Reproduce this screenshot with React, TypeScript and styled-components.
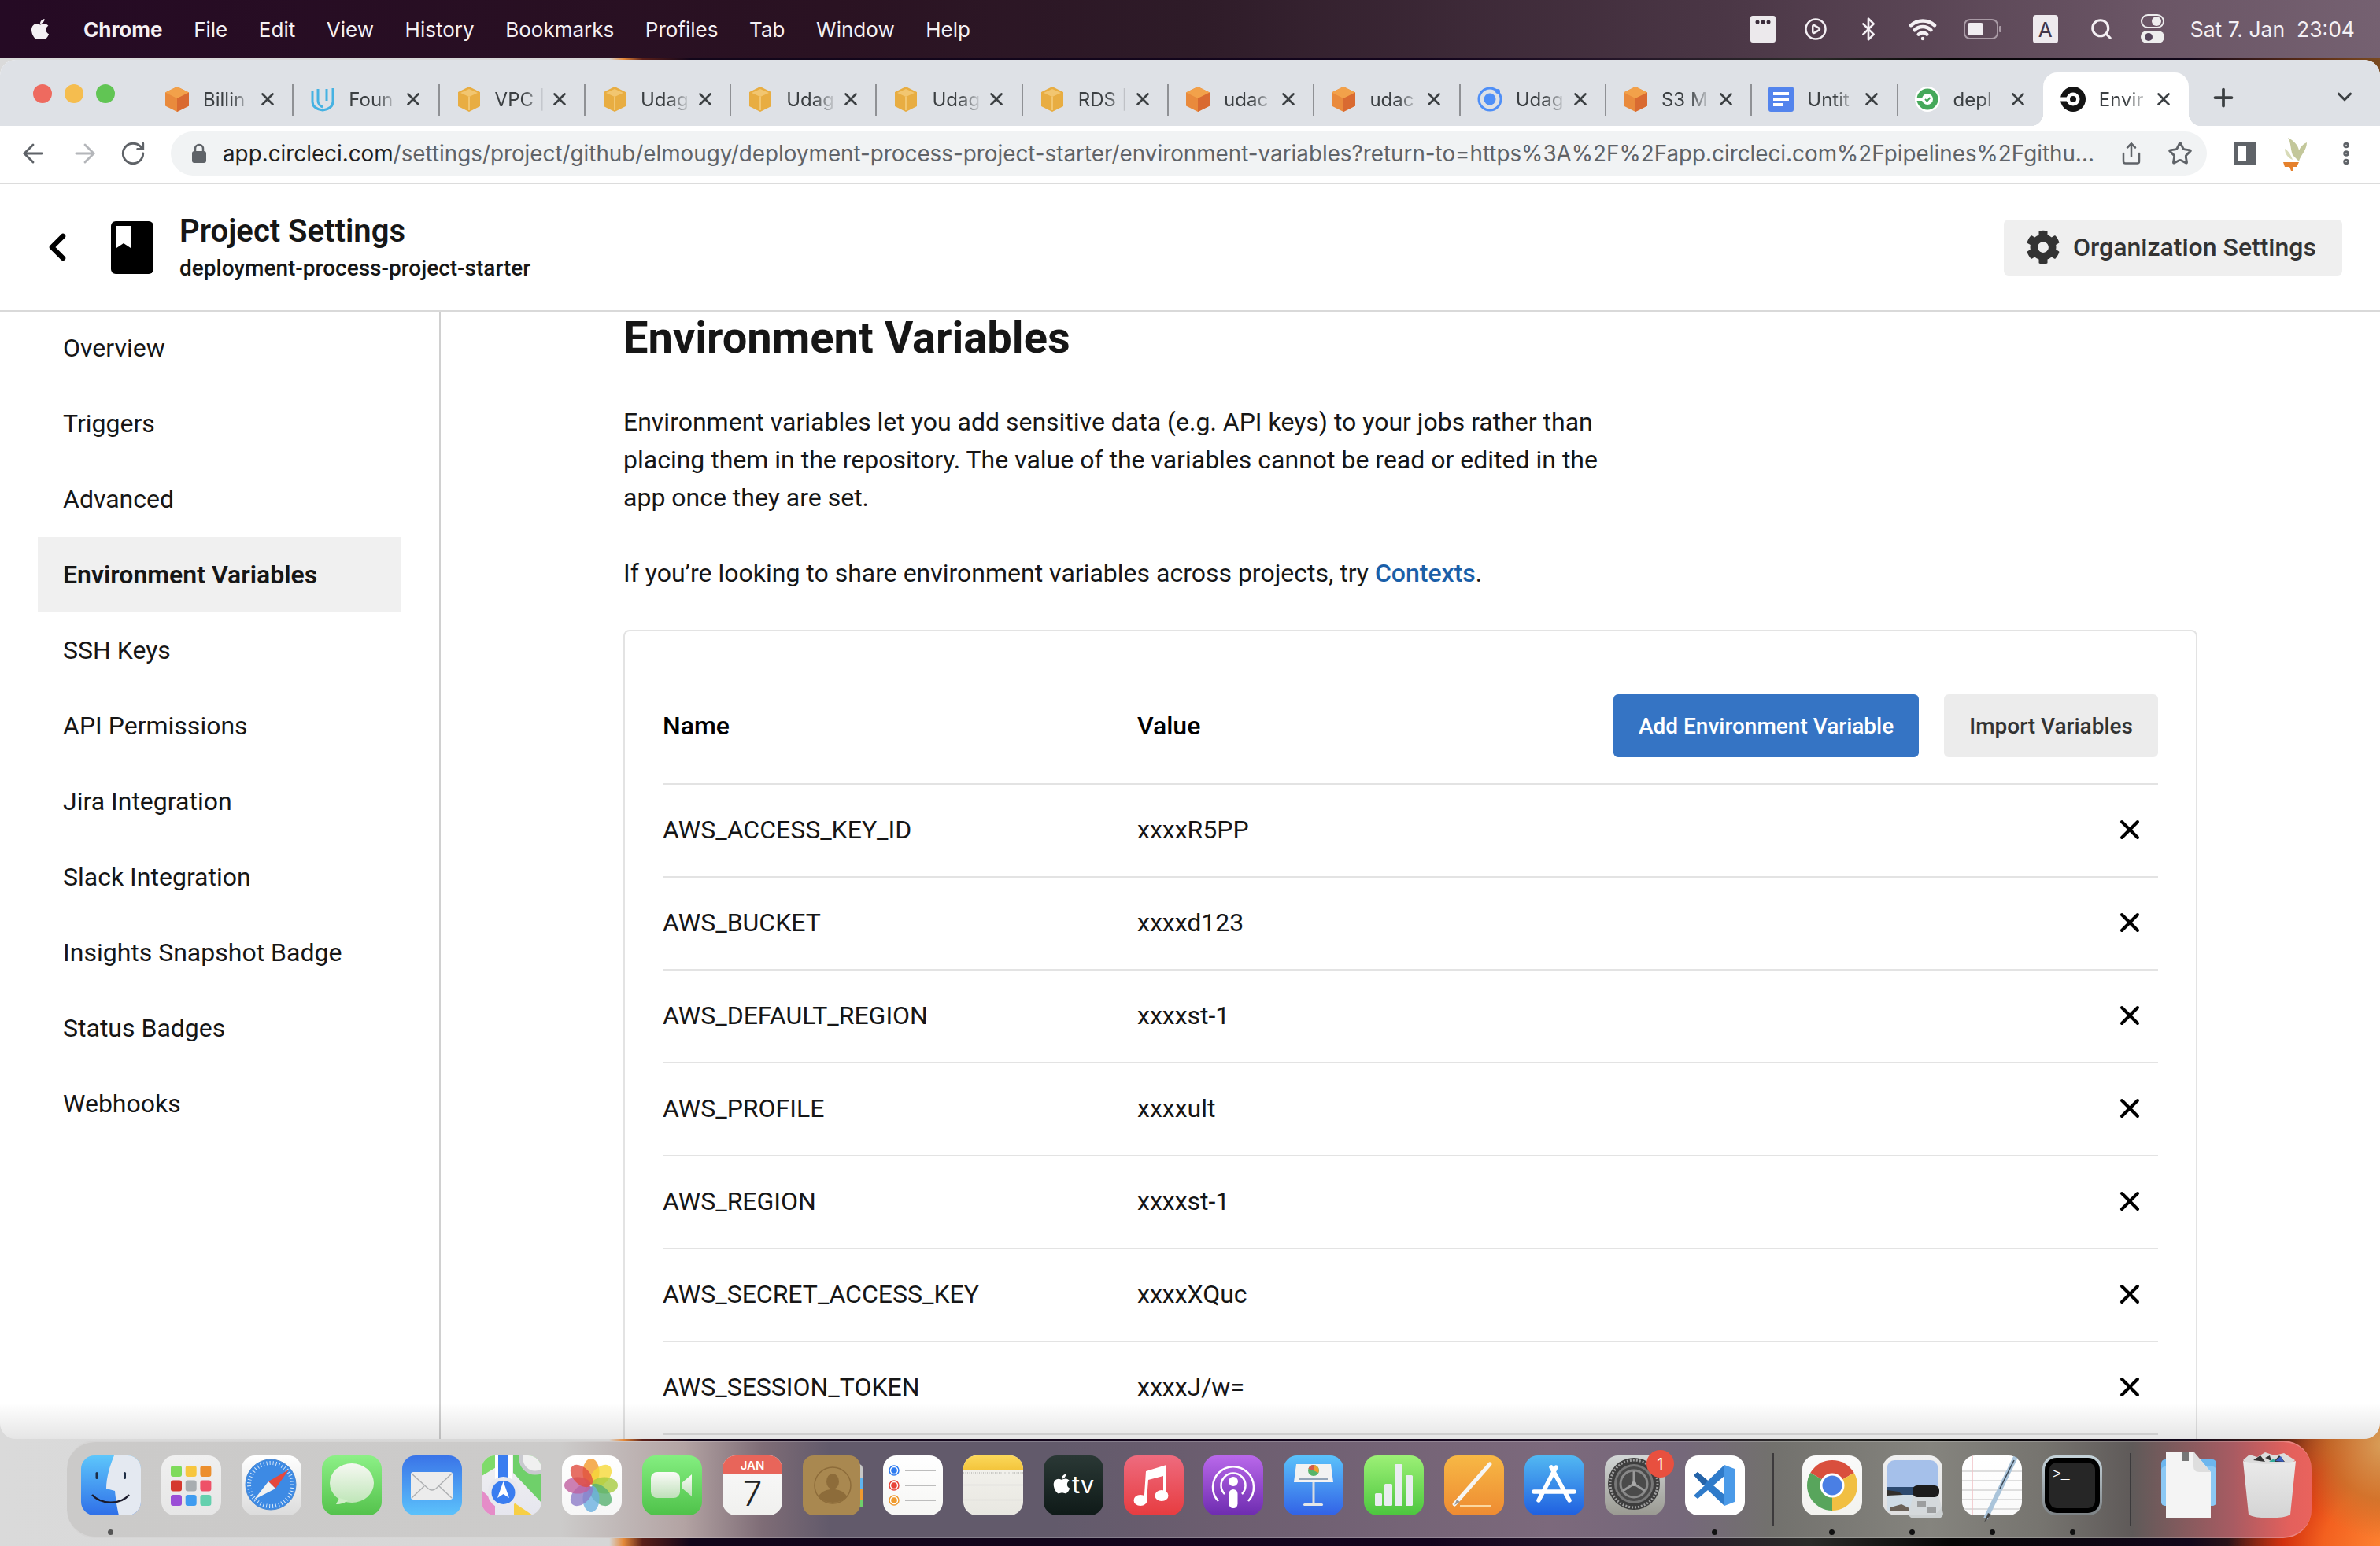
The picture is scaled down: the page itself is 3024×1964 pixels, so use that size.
import React from "react";
import styled, { createGlobalStyle } from "styled-components";
import { ArrowLeft, ArrowRight, RotateCw, Share, Star, EllipsisVertical, Plus, ChevronDown, ChevronLeft, X, Search, CirclePlay, Bluetooth, Wifi } from "lucide-react";
import { FaApple, FaCog } from "react-icons/fa";

const Global = createGlobalStyle`
  html, body { margin: 0; padding: 0; background: #111; }
  * { box-sizing: border-box; }
`;

const Desktop = styled.div`
  width: 3024px; height: 1964px; overflow: hidden; display: flex; flex-direction: column;
  font-family: Roboto, "Liberation Sans", sans-serif;
  background:
    radial-gradient(circle at 3030px 1835px, #d9a05a 0, rgba(201,120,47,.75) 70px, rgba(201,120,47,0) 120px),
    radial-gradient(circle at 3040px 1975px, #ff8a35 0, #f3601f 90px, #d2300f 140px, rgba(150,25,15,0) 210px),
    linear-gradient(90deg, #dadada 0, #d6d6d6 25.6%, #e58a3a 26.2%, #5a1f18 27%, #12061a 29%, #12041c 60%, #241528 68%, #2a2a28 76%, #060505 82%, #12071a 92%, #5a2c16 97%, #7a4a20 100%);
`;

const MenuBar = styled.div`
  height: 74px; flex: none; display: flex; align-items: center; padding: 0 32px 0 36px; color: #f4f0f4;
  font-family: Inter, "Liberation Sans", sans-serif; font-size: 26px;
  background: linear-gradient(90deg, #250a24 0, #2a1222 35%, #2e1b28 50%, #4a3645 72%, #6a5565 90%, #756171 100%);
`;
const MenuItems = styled.div` display: flex; align-items: center; gap: 39.6px; margin-left: 40px; `;
const MenuItem = styled.span<{ $bold?: boolean }>` font-weight: ${p => (p.$bold ? 700 : 400)}; `;
const Status = styled.div` margin-left: auto; display: flex; align-items: center; `;
const StatusSlot = styled.div<{ $w: number }>` width: ${p => p.$w}px; display: flex; justify-content: center; align-items: center; `;
const KeyBadge = styled.span` width: 32px; height: 36px; border-radius: 4px; background: #eeeaee; color: #43364a; font-size: 26px; display: flex; align-items: center; justify-content: center; `;
const Clock = styled.span` margin-left: 14px; white-space: pre; font-size: 26.5px; `;

const Window = styled.div`
  position: relative; height: 1752px; flex: none; margin-top: 2px; background: #fff; border-radius: 20px; overflow: hidden; display: flex; flex-direction: column;
`;
const BottomShade = styled.div`
  position: absolute; left: 0; right: 0; bottom: 0; height: 46px; pointer-events: none;
  background: linear-gradient(180deg, rgba(0,0,0,0), rgba(0,0,0,.1));
`;

const TabStrip = styled.div` height: 84px; flex: none; background: #dee1e6; display: flex; padding-top: 16px; `;
const Lights = styled.div` display: flex; gap: 16px; margin: 15px 41px 0 42px; flex: none; height: 24px; `;
const Light = styled.span<{ $c: string }>` width: 24px; height: 24px; border-radius: 50%; background: ${p => p.$c}; `;
const Tab = styled.div<{ $active?: boolean; $sep?: boolean }>`
  position: relative; width: 185.3px; height: 68px; flex: none; display: flex; align-items: center; padding-left: 22px;
  ${p => p.$active && `background: #fff; border-radius: 18px 18px 0 0;`}
  ${p => p.$sep && `&::after { content: ""; position: absolute; right: -1px; top: 15px; height: 40px; width: 2px; background: #8f9195; }`}
  ${p => p.$active && `
    &::before { content: ""; position: absolute; left: -16px; bottom: 0; width: 16px; height: 16px; background: radial-gradient(circle at 0 0, transparent 16px, #fff 16.5px); }
    &::after { content: ""; position: absolute; right: -16px; bottom: 0; width: 16px; height: 16px; background: radial-gradient(circle at 100% 0, transparent 16px, #fff 16.5px); }
  `}
`;
const TabTitle = styled.span`
  width: 64px; margin-left: 17px; white-space: nowrap; font-family: Inter, "Liberation Sans", sans-serif; font-size: 24px; color: #3c4043;
  -webkit-mask-image: linear-gradient(90deg, #000 55%, transparent 100%); mask-image: linear-gradient(90deg, #000 55%, transparent 100%);
`;
const TabClose = styled.span` margin-left: 5px; display: flex; color: #3c4043; `;
const NewTab = styled.span` margin-left: 26px; margin-top: 14px; display: flex; height: 40px; color: #3c4043; `;
const TabMenu = styled.span` margin-left: auto; margin-right: 30px; margin-top: 16px; display: flex; height: 36px; color: #3c4043; `;

const Toolbar = styled.div` height: 74px; flex: none; background: #fff; display: flex; align-items: center; padding: 0 0 2px 23px; border-bottom: 2px solid #dcdcdc; `;
const NavButton = styled.span<{ $off?: boolean; $gap?: number }>` display: flex; margin-left: ${p => p.$gap ?? 0}px; color: ${p => (p.$off ? "#b4b6ba" : "#5f6368")}; `;
const UrlBar = styled.div` width: 2587px; height: 56px; border-radius: 28px; background: #f1f3f4; margin-left: 31px; display: flex; align-items: center; padding-left: 26px; flex: none; `;
const UrlText = styled.div` margin-left: 20px; width: 2384px; white-space: nowrap; font-family: Inter, "Liberation Sans", sans-serif; font-size: 27.8px; color: #5f6368; `;
const UrlHost = styled.span` color: #1f1f1f; `;
const UrlAction = styled.span<{ $gap: number }>` margin-left: ${p => p.$gap}px; display: flex; color: #5f6368; `;
const ToolRight = styled.div` display: flex; align-items: center; margin-left: 33px; gap: 28px; color: #5f6368; `;

const PageHeader = styled.header` height: 162px; flex: none; border-bottom: 2px solid #d9d9d9; display: flex; align-items: center; padding: 0 48px 0 45px; background: #fff; `;
const BackIcon = styled.span` display: flex; color: #000; width: 96px; `;
const Titles = styled.div` margin-left: 33px; display: flex; flex-direction: column; `;
const Title = styled.h1` margin: 0; font-size: 40px; line-height: 50px; font-weight: 600; color: #161616; `;
const Subtitle = styled.div` font-size: 28px; line-height: 36px; font-weight: 500; color: #161616; margin-top: 4px; `;
const OrgButton = styled.button`
  margin-left: auto; width: 430px; height: 71px; border: 0; border-radius: 6px; background: #efefef; display: flex; align-items: center; gap: 16px; padding: 0 0 0 28px;
  font-family: inherit; font-size: 32px; font-weight: 500; color: #333;
`;

const Body = styled.div` flex: 1; min-height: 0; display: grid; grid-template-columns: 560px 1fr; `;
const Sidebar = styled.nav` border-right: 2px solid #d0d0d0; padding: 0 48px; display: flex; flex-direction: column; `;
const NavList = styled.div` margin-top: -2px; display: flex; flex-direction: column; `;
const NavRow = styled.div<{ $active?: boolean }>`
  height: 96px; flex: none; display: flex; align-items: center; padding-left: 32px; width: 462px; font-size: 32px; color: #161616;
  font-weight: ${p => (p.$active ? 600 : 400)}; background: ${p => (p.$active ? "#f0f0f0" : "transparent")};
`;
const Main = styled.main` padding: 1px 0 0 232px; overflow: hidden; `;
const Heading = styled.h2` margin: 0; font-size: 56px; line-height: 64px; font-weight: 700; color: #161616; `;
const Para = styled.p` margin: 0; width: 1260px; font-size: 32px; line-height: 48px; color: #161616; `;
const IntroPara = styled(Para)` margin-top: 51px; `;
const SharePara = styled(Para)` margin-top: 48px; `;
const Link = styled.a` color: #1a5fa9; font-weight: 500; `;
const Card = styled.section` margin-top: 48px; width: 2000px; min-height: 1300px; border: 2px solid #e3e3e3; border-radius: 8px; padding: 0 48px; background: #fff; `;
const TableHead = styled.div` height: 195px; padding-top: 80px; display: flex; align-items: flex-start; border-bottom: 2px solid #e3e3e3; `;
const HeadCell = styled.div<{ $w?: number }>` width: ${p => p.$w ?? 603}px; height: 80px; display: flex; align-items: center; font-size: 32px; font-weight: 500; color: #000; `;
const Buttons = styled.div` margin-left: auto; display: flex; gap: 32px; `;
const Btn = styled.button<{ $primary?: boolean }>`
  height: 80px; padding: 0 32px; border: 0; border-radius: 6px; font-family: inherit; font-size: 28px; font-weight: 500;
  background: ${p => (p.$primary ? "#3574c4" : "#ececec")}; color: ${p => (p.$primary ? "#fff" : "#333")};
`;
const Row = styled.div` height: 118px; display: flex; align-items: center; border-bottom: 2px solid #e3e3e3; font-size: 32px; color: #161616; padding-bottom: 2px; `;
const NameCell = styled.div` width: 603px; `;
const ValueCell = styled.div``;
const RowClose = styled.span` margin-left: auto; margin-right: 16px; display: flex; color: #000; `;

const Dock = styled.div`
  margin: 2px 0 0 85px; width: 2852px; height: 124px; flex: none; border-radius: 36px; display: flex; padding-left: 5px; overflow: visible;
  border-top: 2px solid rgba(255,255,255,.22); border-bottom: 2px solid rgba(255,255,255,.22);
  background: linear-gradient(90deg, #cbcac9 0, #cccbca 22%, #b3a3a3 27.5%, #7e6c76 31%, #625a6b 34%, #625a6b 44%, #6d5e70 52%, #7c697c 66%, #75687a 72%, #72716d 76%, #85847e 83%, #76746f 88%, #5f5a59 92%, #a85b62 96.5%, #e3605c 99%, #e9635d 100%);
`;
const Cell = styled.div` position: relative; width: 101.9px; flex: none; display: flex; flex-direction: column; align-items: center; padding-top: 17px; `;
const DockSvg = styled.svg` width: 76px; height: 76px; overflow: visible; flex: none; display: block; `;
const RunDot = styled.span<{ $on?: boolean }>` width: 7px; height: 7px; border-radius: 50%; margin-top: 18px; background: ${p => (p.$on ? "#111" : "transparent")}; `;
const FinderDot = styled(RunDot)` background: #555; `;
const NotifBadge = styled.span` position: absolute; left: 66px; top: 10px; width: 35px; height: 35px; border-radius: 50%; background: #e8503f; color: #fff; font-family: Inter, sans-serif; font-size: 20px; display: flex; align-items: center; justify-content: center; `;
const DockDivider = styled.div<{ $w: number }>` width: ${p => p.$w}px; flex: none; display: flex; justify-content: center; padding-top: 14px; &::before { content: ""; width: 2px; height: 92px; background: #3c3a3c; } `;

const Fav = styled.svg` width: 32px; height: 32px; flex: none; `;

const cube = (a: string, b: string, c: string) => (
  <Fav viewBox="0 0 32 32"><path d="M16 0 31 7.500v17L16 32 1 24.500v-17z" fill={b} /><path d="M16 0 31 7.500 16 15 1 7.500z" fill={a} /><path d="M16 15 31 7.500v17L16 32z" fill={c} /></Fav>
);
const orange = cube("#f2a14a", "#e98a3c", "#d96a31");
const yellow = (
  <Fav viewBox="0 0 32 32"><path d="M16 0 30 7v18l-14 7-14-7V7z" fill="#e8ad42" /><path d="M16 3 27 8 16 13 5 8z" fill="#f2c670" /><path d="M15 13h2v17h-2z" fill="#f2c670" /></Fav>
);
const favs: Record<string, React.ReactNode> = {
  orange, yellow,
  udacity: <Fav viewBox="0 0 32 32"><path d="M3 5v14c0 7 6 10 13 11 7-1 13-4 13-11V2" fill="none" stroke="#46b2e2" strokeWidth="3" /><path d="M10 3v15c0 4 3 7 6 8M21 3v15" fill="none" stroke="#46b2e2" strokeWidth="3" /></Fav>,
  ionic: <Fav viewBox="0 0 32 32"><circle cx="16" cy="16" r="14" fill="none" stroke="#4f8ff7" strokeWidth="3" /><circle cx="16" cy="16" r="7.500" fill="#4f8ff7" /><circle cx="26" cy="6" r="3" fill="#4f8ff7" /></Fav>,
  docs: <Fav viewBox="0 0 32 32"><rect width="32" height="32" rx="3" fill="#5384ed" /><rect x="6" y="7" width="20" height="4" fill="#fff" /><rect x="6" y="14" width="20" height="4" fill="#fff" /><rect x="6" y="21" width="13" height="4" fill="#fff" /></Fav>,
  green: <Fav viewBox="0 0 32 32"><circle cx="16" cy="16" r="16" fill="#fff" /><circle cx="16" cy="16" r="13.500" fill="#45a85a" /><circle cx="16" cy="16" r="7" fill="#fff" /><rect x="0" y="14" width="12" height="4" fill="#fff" /><path d="m13 16 2.500 2.500 4-4.500" fill="none" stroke="#45a85a" strokeWidth="2" /></Fav>,
  circle: <Fav viewBox="0 0 32 32"><circle cx="16" cy="16" r="16" fill="#141414" /><circle cx="16" cy="16" r="8.500" fill="#fff" /><circle cx="16" cy="16" r="4" fill="#141414" /><rect x="0" y="13.500" width="9" height="5" fill="#fff" /></Fav>,
};

const tabs: [string, string][] = [
  ["orange", "Billin"], ["udacity", "Foun"], ["yellow", "VPC |"], ["yellow", "Udag"], ["yellow", "Udag"], ["yellow", "Udag"], ["yellow", "RDS |"],
  ["orange", "udac"], ["orange", "udac"], ["ionic", "Udag"], ["orange", "S3 M"], ["docs", "Untit"], ["green", "depl"], ["circle", "Envir"],
];
const menus = ["File", "Edit", "View", "History", "Bookmarks", "Profiles", "Tab", "Window", "Help"];
const navItems = ["Overview", "Triggers", "Advanced", "Environment Variables", "SSH Keys", "API Permissions", "Jira Integration", "Slack Integration", "Insights Snapshot Badge", "Status Badges", "Webhooks"];
const rows = [
  ["AWS_ACCESS_KEY_ID", "xxxxR5PP"], ["AWS_BUCKET", "xxxxd123"], ["AWS_DEFAULT_REGION", "xxxxst-1"], ["AWS_PROFILE", "xxxxult"],
  ["AWS_REGION", "xxxxst-1"], ["AWS_SECRET_ACCESS_KEY", "xxxxXQuc"], ["AWS_SESSION_TOKEN", "xxxxJ/w="],
];

const G = ({ id, a, b }: { id: string; a: string; b: string }) => (
  <linearGradient id={id} x1="0" y1="0" x2="0" y2="1"><stop offset="0" stopColor={a} /><stop offset="1" stopColor={b} /></linearGradient>
);
const AppIcon = ({ n, a, b, extra, children }: { n: string; a: string; b: string; extra?: React.ReactNode; children?: React.ReactNode }) => (
  <DockSvg viewBox="0 0 76 76">
    <defs>
      <clipPath id={`sq-${n}`}><rect width="76" height="76" rx="17" /></clipPath>
      <G id={`bg-${n}`} a={a} b={b} />
    </defs>
    <g clipPath={`url(#sq-${n})`}><rect width="76" height="76" fill={`url(#bg-${n})`} />{children}</g>
    {extra}
  </DockSvg>
);

const lpColors = ["#7edb5b", "#f7c63e", "#ec8f2e", "#d5392f", "#a8adb0", "#ee5168", "#9a4ed6", "#3f9cf0", "#63d0ae"];
const petals = ["#f39a2c", "#f6d838", "#a8cc40", "#58b070", "#6cb0e0", "#8c7cc8", "#c060a0", "#e04c40"];

const dockApps: { key: string; on?: boolean; badge?: boolean; finder?: boolean; el: React.ReactNode }[] = [
  { key: "finder", finder: true, el: (
    <AppIcon n="finder" a="#5dc6fb" b="#2f6fe8">
      <path d="M42 0C37 12 32 28 32 42l11 3c1 11 3 23 5 31h28V0z" fill="#e4e9f1" />
      <rect x="18.500" y="21" width="3" height="9" rx="1.500" fill="#1d2c44" /><rect x="54" y="21" width="3" height="9" rx="1.500" fill="#1d2c44" />
      <path d="M14 50c12 13 36 13 47 0" fill="none" stroke="#1a1a2a" strokeWidth="2.500" />
    </AppIcon>) },
  { key: "launchpad", el: (
    <AppIcon n="lp" a="#f0f0f0" b="#e6e6e6">
      {lpColors.map((c, i) => <rect key={c} x={12 + (i % 3) * 18.7} y={13 + Math.floor(i / 3) * 18.5} width="14" height="14" rx="3" fill={c} />)}
    </AppIcon>) },
  { key: "safari", el: (
    <AppIcon n="safari" a="#ffffff" b="#dcdcdc">
      <circle cx="37" cy="37" r="32" fill="#3d8ae4" stroke="#4c88cf" strokeWidth="1" />
      <circle cx="37" cy="37" r="27.500" fill="none" stroke="#d8e8f8" strokeWidth="5" strokeDasharray="1 3" />
      <path d="M60 18 34 33l9 9z" fill="#e5483c" /><path d="M16 56l18-23 9 9z" fill="#f2f2f2" />
    </AppIcon>) },
  { key: "messages", el: (
    <AppIcon n="msg" a="#8cf086" b="#54c24c">
      <defs><G id="bub" a="#f6f8f2" b="#bfe6b8" /></defs>
      <ellipse cx="38" cy="35" rx="28" ry="25" fill="url(#bub)" /><path d="M22 54l-4 8c6 0 12-2 15-5z" fill="#d0eec8" />
    </AppIcon>) },
  { key: "mail", el: (
    <AppIcon n="mail" a="#3a74e8" b="#5cc2fb">
      <rect x="11" y="21" width="53" height="35" rx="3" fill="#ececec" />
      <path d="M12 23l21 19q5 4 10 0l20-19M12 54l16-15M63 54 47 39" fill="none" stroke="#aeb0b2" strokeWidth="1.500" />
    </AppIcon>) },
  { key: "maps", el: (
    <AppIcon n="maps" a="#f0f0f2" b="#e6e6ee">
      <path d="M40 0h36v60L40 22z" fill="#6fd06a" /><path d="M0 0h20v14L0 26z" fill="#7edb6a" /><path d="M0 44l17 16v16H0z" fill="#e58cc8" />
      <path d="M41 60l24 16H41z" fill="#f7cf45" /><rect x="21" width="13" height="30" fill="#3a7df0" /><rect x="17" width="4" height="30" fill="#fff" /><rect x="34" width="5" height="30" fill="#fff" />
      <circle cx="68" cy="4" r="18" fill="#f0f0f0" stroke="#c9c9cf" strokeWidth="5" />
      <circle cx="27.500" cy="47" r="20" fill="#e8e8ee" /><circle cx="27.500" cy="47" r="15" fill="#3a7df0" /><path d="M27.500 33 35 54l-7.500-5L20 54z" fill="#fff" />
    </AppIcon>) },
  { key: "photos", el: (
    <AppIcon n="photos" a="#ffffff" b="#f6f6f6">
      {petals.map((c, i) => <ellipse key={c} cx="37" cy="21" rx="10.500" ry="17" fill={c} opacity=".8" transform={`rotate(${i * 45} 37 38)`} />)}
      <circle cx="37" cy="38" r="1.500" fill="#fff" />
    </AppIcon>) },
  { key: "facetime", el: (
    <AppIcon n="ft" a="#84ee80" b="#4fc24a">
      <defs><G id="cam" a="#fbfbf8" b="#bfe0ba" /></defs>
      <rect x="11" y="21" width="37" height="33" rx="8" fill="url(#cam)" /><path d="M50 35 63 24v28L50 41z" fill="url(#cam)" />
    </AppIcon>) },
  { key: "calendar", el: (
    <AppIcon n="cal" a="#fafafa" b="#f0f0ee">
      <rect width="76" height="23" fill="#e8655a" />
      <text x="38" y="18" textAnchor="middle" fontFamily="Inter, sans-serif" fontSize="15" fontWeight="600" fill="#fff">JAN</text>
      <text x="38" y="64" textAnchor="middle" fontFamily="Inter, sans-serif" fontSize="44" fontWeight="300" fill="#222">7</text>
    </AppIcon>) },
  { key: "contacts", el: (
    <DockSvg viewBox="0 0 76 76">
      <rect x="60" y="11" width="16" height="55" rx="5" fill="#c8c8c6" /><rect x="66" y="28" width="10" height="14" fill="#5eb4ef" /><rect x="66" y="42" width="10" height="14" fill="#ef9a30" /><rect x="66" y="56" width="10" height="10" fill="#6fd06a" />
      <rect width="73" height="76" rx="14" fill="#a98850" />
      <circle cx="38" cy="38" r="23" fill="none" stroke="#8d6c3a" strokeWidth="1.500" />
      <ellipse cx="38" cy="33" rx="8" ry="10" fill="#8d6c3a" />
      <path d="M20 52c4-7 11-9 18-9s14 2 18 9c-4 5-11 8-18 8s-14-3-18-8z" fill="#8d6c3a" />
    </DockSvg>) },
  { key: "reminders", el: (
    <AppIcon n="rem" a="#ffffff" b="#f6f6f4">
      {[["#2d7bf0", 19], ["#e8453a", 38], ["#ef9a2e", 57]].map(([c, y]) => (
        <g key={String(c)}><circle cx="14" cy={y as number} r="6" fill="#fff" stroke={c as string} strokeWidth="1.500" /><circle cx="14" cy={y as number} r="3.800" fill={c as string} /><rect x="28" y={(y as number) - 1} width="39" height="2" fill="#bdbdbd" /></g>
      ))}
    </AppIcon>) },
  { key: "notes", el: (
    <AppIcon n="notes" a="#f4f3ee" b="#e8e7e1">
      <defs><G id="ny" a="#fbd85a" b="#f3c43b" /></defs>
      <rect width="76" height="19" fill="url(#ny)" /><path d="M0 22h76" stroke="#c9c9c4" strokeWidth="2" strokeDasharray="1 1.500" /><path d="M0 37.500h76M0 56.500h76" stroke="#dcdcd6" strokeWidth="1.500" />
    </AppIcon>) },
  { key: "tv", el: (
    <AppIcon n="tv" a="#2a3835" b="#0f1a18">
      <FaApple x="9" y="22" size={28} color="#fff" />
      <text x="36" y="48" fontFamily="Inter, sans-serif" fontSize="31" fill="#fff">tv</text>
    </AppIcon>) },
  { key: "music", el: (
    <AppIcon n="music" a="#ee6b7e" b="#e73c40">
      <ellipse cx="21" cy="57" rx="8.500" ry="7" fill="#fff" /><ellipse cx="48" cy="51" rx="8.500" ry="7" fill="#fff" />
      <path d="M25.500 57 28 20 54 12v39h-4V26l-19 5-2 26z" fill="#fff" />
    </AppIcon>) },
  { key: "podcasts", el: (
    <AppIcon n="pod" a="#b968ea" b="#6e2cb0">
      <path d="M19 58a26 26 0 1 1 38 0M27 49a15.500 15.500 0 1 1 22 0" fill="none" stroke="#fff" strokeWidth="2.500" />
      <circle cx="38" cy="33" r="6" fill="#fff" /><rect x="32.500" y="43" width="11" height="24" rx="5.500" fill="#fff" />
    </AppIcon>) },
  { key: "keynote", el: (
    <AppIcon n="key" a="#5ac2fb" b="#3262e6">
      <path d="M16 11h44l3 23H13z" fill="#f2f2f2" /><rect x="20" y="29" width="36" height="2" fill="#93a4b8" />
      <circle cx="38" cy="19" r="7" fill="#58b56a" /><path d="M38 19V12a7 7 0 0 1 6 10z" fill="#f0a030" /><path d="M38 19V12a7 7 0 0 0-6.500 5z" fill="#d95a4a" />
      <rect x="36.500" y="34" width="3" height="27" fill="#d8dce0" /><rect x="25" y="61" width="25" height="3" rx="1.500" fill="#e4e6e8" />
    </AppIcon>) },
  { key: "numbers", el: (
    <AppIcon n="num" a="#9cf076" b="#4cc63e">
      <rect x="14" y="48" width="9" height="16" rx="1.500" fill="#e9edf0" /><rect x="26" y="36" width="10" height="28" rx="1.500" fill="#e9edf0" /><rect x="39" y="11" width="10" height="53" rx="1.500" fill="#e9edf0" /><rect x="53" y="25" width="9" height="39" rx="1.500" fill="#e9edf0" />
    </AppIcon>) },
  { key: "pages", el: (
    <AppIcon n="pages" a="#f7b845" b="#ee8b32">
      <path d="M13 62 58 11" stroke="#f6f6f4" strokeWidth="5" strokeLinecap="round" /><path d="M13 63l3-7 4 3z" fill="#999" /><path d="M20 64h40" stroke="#fbd7a0" strokeWidth="2" />
    </AppIcon>) },
  { key: "appstore", el: (
    <AppIcon n="as" a="#52b8f2" b="#2060e0">
      <path d="M40 15 18 57M34 15l23 42M12 46h51" stroke="#fff" strokeWidth="5.500" strokeLinecap="round" fill="none" />
    </AppIcon>) },
  { key: "prefs", badge: true, el: (
    <AppIcon n="sys" a="#d2d6d6" b="#9a9a92">
      <circle cx="37" cy="36" r="33" fill="#3d3d3d" /><circle cx="37" cy="36" r="30" fill="none" stroke="#a0a0a0" strokeWidth="3" strokeDasharray="2 2" />
      <circle cx="37" cy="36" r="25" fill="#777" /><circle cx="37" cy="36" r="22" fill="#4a4a4a" /><circle cx="37" cy="36" r="17" fill="none" stroke="#888" strokeWidth="3" />
      <path d="M37 36V20M37 36 23 45M37 36l14 9" stroke="#999" strokeWidth="3" /><circle cx="37" cy="36" r="3" fill="#aaa" />
    </AppIcon>) },
  { key: "vscode", on: true, el: (
    <AppIcon n="vs" a="#ffffff" b="#ffffff">
      <path d="M50 12 29 32 16 21l-5 4 14 13-14 13 5 4 13-11 21 20V50L36 38l14-12z" fill="#2f7bca" /><path d="M11 25l5-4 13 11-6 6z" fill="#2563a8" /><path d="M50 12l13 5v42l-13 5z" fill="#4a9ae8" />
    </AppIcon>) },
];
const dockApps2: { key: string; on?: boolean; el: React.ReactNode }[] = [
  { key: "chrome", on: true, el: (
    <AppIcon n="chr" a="#fafafa" b="#f2f2ee">
      <path d="M38 38 10.300 22a32 32 0 0 1 55.400 0z" fill="#d94f3d" /><path d="M38 38 65.700 22A32 32 0 0 1 38 70z" fill="#f1bf42" /><path d="M38 38v32A32 32 0 0 1 10.300 22z" fill="#58a55c" />
      <circle cx="38" cy="38" r="15.500" fill="#fff" /><circle cx="38" cy="38" r="12.500" fill="#4a7fe4" />
    </AppIcon>) },
  { key: "preview", on: true, el: (
    <AppIcon n="prev" a="#f0f0f0" b="#dfdfdf" extra={<>
      <path d="M39 50h32l6 24q-1 6-8 6H41q-7 0-8-6z" fill="#d4d8da" opacity=".9" /><rect x="44" y="58" width="11" height="8" fill="#777" opacity=".6" /><rect x="56" y="66" width="12" height="7" fill="#777" opacity=".6" />
      <rect x="38" y="38" width="34" height="15" rx="6" fill="#1c1c1c" />
    </>}>
      <rect x="6" y="6" width="64" height="64" rx="9" fill="#a5c0ea" /><rect x="6" y="40" width="64" height="10" fill="#2c4a70" /><rect x="6" y="50" width="64" height="20" fill="#cfdce6" /><path d="M6 44l14 2 6 4-20 1z" fill="#33302c" /><path d="M10 66l14-4 10 5v3H10z" fill="#6a6158" />
    </AppIcon>) },
  { key: "textedit", on: true, el: (
    <AppIcon n="te" a="#ffffff" b="#fafafa" extra={<>
      <path d="M30 80 68 2" stroke="#aac4da" strokeWidth="6" /><path d="M28 85l5-12 4 2z" fill="#444" /><path d="M48 42 66 6" stroke="#3e4a55" strokeWidth="1.500" />
    </>}>
      <path d="M0 20h76M0 32h76M0 44h76M0 56h76M0 68h76" stroke="#d4d4d4" strokeWidth="1.500" /><path d="M13 0v76" stroke="#f0c0c4" strokeWidth="1.500" />
    </AppIcon>) },
  { key: "terminal", on: true, el: (
    <AppIcon n="term" a="#c5d3da" b="#7d8285">
      <rect x="3" y="3" width="70" height="70" rx="15" fill="#000" /><rect x="9" y="9" width="58" height="58" rx="9" fill="#262626" />
      <text x="13" y="29" fontFamily="Liberation Mono, monospace" fontSize="18" fill="#fff">&gt;_</text>
    </AppIcon>) },
];

const DocsStack = () => (
  <DockSvg viewBox="0 0 76 76">
    <rect x="3" y="5" width="70" height="59" rx="5" fill="#6cb6ee" /><rect x="3" y="14" width="70" height="50" rx="5" fill="#8cc8f4" />
    <path d="M9 -5h35l22 26v59H9z" fill="#f4f4f4" /><path d="M44 -5 66 21H51q-7 0-7-7z" fill="#dedede" /><rect x="30" y="-5" width="8" height="12" fill="#777" />
  </DockSvg>
);
const Trash = () => (
  <DockSvg viewBox="0 0 76 76">
    <defs><G id="can" a="#eaeaea" b="#d4d4d4" /></defs>
    <path d="M5 6l8-7 10 3 10-6 12 4 12-3 14 9-8 8H14z" fill="#dcdcdc" />
    <path d="M5 7c18 5 49 5 67 0l-7 68c-8 6-45 6-53 0z" fill="url(#can)" />
    <path d="M18 6l9-6 6 8zM44 8l7-8 7 8zM33 3l6-3 2 7z" fill="#333" /><path d="M46 7l7-6 4 7z" fill="#3a5fc0" /><path d="M38 8l6-4 2 4z" fill="#3a9" />
  </DockSvg>
);

const StatusMenu = () => (
  <svg width="32" height="34" viewBox="0 0 32 34"><rect width="32" height="34" rx="3" fill="#ece9ec" /><circle cx="9" cy="8" r="2.500" fill="#3a2c3a" /><circle cx="16" cy="8" r="2.500" fill="#3a2c3a" /><circle cx="23" cy="8" r="2.500" fill="#3a2c3a" /></svg>
);
const BatteryIcon = () => (
  <svg width="48" height="26" viewBox="0 0 48 26"><rect x="1" y="1" width="42" height="24" rx="7" fill="none" stroke="#a99aa5" strokeWidth="2" /><rect x="5" y="5" width="20" height="16" rx="3" fill="#f0ecf0" /><rect x="45" y="9" width="3" height="8" rx="1" fill="#a99aa5" /></svg>
);
const ControlIcon = () => (
  <svg width="30" height="38" viewBox="0 0 30 38"><rect x="1" y="1" width="28" height="16" rx="8" fill="none" stroke="#eee" strokeWidth="2" /><circle cx="20" cy="9" r="6" fill="#eee" /><rect x="0" y="21" width="30" height="16" rx="8" fill="#eee" /><circle cx="10" cy="29" r="5" fill="#55445a" /></svg>
);
const ExtensionIcon = () => (
  <svg width="40" height="44" viewBox="0 0 40 44"><path d="M12 2c4 6 3 14 6 22l8 8c2-8 10-14 10-24-5 2-8 6-10 10-1-6-6-12-14-16z" fill="#c3c79a" /><path d="M8 16c4 2 8 8 10 14-6-2-10-8-10-14z" fill="#d8dbb8" /><path d="M6 33h20l-3 6h-4l-1 5h-2l-2-5h-6z" fill="#e5812c" /></svg>
);
const SidePanelIcon = () => (
  <svg width="30" height="30" viewBox="0 0 30 30"><path d="M1 1h28v28H1z" fill="#5f6368" /><rect x="6" y="6" width="11" height="18" fill="#fff" /></svg>
);
const ProjectBook = () => (
  <svg width="54" height="67" viewBox="0 0 54 67"><rect width="54" height="67" rx="6" fill="#000" /><path d="M7 6h18v28l-9-6-9 6z" fill="#fff" /></svg>
);
const LockIcon = () => (
  <svg width="20" height="26" viewBox="0 0 20 26"><path d="M5 11V7a5 5 0 0 1 10 0v4" fill="none" stroke="#5f6368" strokeWidth="2.500" /><rect x="1" y="10" width="18" height="15" rx="3" fill="#5f6368" /></svg>
);

export default function App() {
  return (
    <Desktop>
      <Global />
      <MenuBar>
        <FaApple size={30} />
        <MenuItems>
          <MenuItem $bold>Chrome</MenuItem>
          {menus.map(m => <MenuItem key={m}>{m}</MenuItem>)}
        </MenuItems>
        <Status>
          <StatusSlot $w={68}><StatusMenu /></StatusSlot>
          <StatusSlot $w={67}><CirclePlay size={30} strokeWidth={2} /></StatusSlot>
          <StatusSlot $w={66}><Bluetooth size={32} strokeWidth={2} /></StatusSlot>
          <StatusSlot $w={72}><Wifi size={36} strokeWidth={3} /></StatusSlot>
          <StatusSlot $w={80}><BatteryIcon /></StatusSlot>
          <StatusSlot $w={80}><KeyBadge>A</KeyBadge></StatusSlot>
          <StatusSlot $w={62}><Search size={30} strokeWidth={2.500} /></StatusSlot>
          <StatusSlot $w={68}><ControlIcon /></StatusSlot>
          <Clock>Sat 7. Jan  23:04</Clock>
        </Status>
      </MenuBar>

      <Window>
        <TabStrip>
          <Lights><Light $c="#ee6a5f" /><Light $c="#f5bd4f" /><Light $c="#61c554" /></Lights>
          {tabs.map(([f, t], i) => (
            <Tab key={i} $active={i === 13} $sep={i < 12}>
              {favs[f]}
              <TabTitle>{t}</TabTitle>
              <TabClose><X size={26} strokeWidth={2.500} /></TabClose>
            </Tab>
          ))}
          <NewTab><Plus size={36} strokeWidth={2.500} /></NewTab>
          <TabMenu><ChevronDown size={30} strokeWidth={2.500} /></TabMenu>
        </TabStrip>

        <Toolbar>
          <NavButton><ArrowLeft size={38} strokeWidth={1.800} /></NavButton>
          <NavButton $off $gap={28}><ArrowRight size={38} strokeWidth={1.800} /></NavButton>
          <NavButton $gap={25}><RotateCw size={34} strokeWidth={2} /></NavButton>
          <UrlBar>
            <LockIcon />
            <UrlText><UrlHost>app.circleci.com</UrlHost>/settings/project/github/elmougy/deployment-process-project-starter/environment-variables?return-to=https%3A%2F%2Fapp.circleci.com%2Fpipelines%2Fgithu...</UrlText>
            <UrlAction $gap={26}><Share size={30} strokeWidth={2} /></UrlAction>
            <UrlAction $gap={31}><Star size={32} strokeWidth={2.200} /></UrlAction>
          </UrlBar>
          <ToolRight>
            <SidePanelIcon />
            <ExtensionIcon />
            <EllipsisVertical size={36} strokeWidth={3} />
          </ToolRight>
        </Toolbar>

        <PageHeader>
          <BackIcon><ChevronLeft size={56} strokeWidth={2.800} /></BackIcon>
          <ProjectBook />
          <Titles>
            <Title>Project Settings</Title>
            <Subtitle>deployment-process-project-starter</Subtitle>
          </Titles>
          <OrgButton><FaCog size={44} color="#333" />Organization Settings</OrgButton>
        </PageHeader>

        <Body>
          <Sidebar>
            <NavList>
              {navItems.map(n => <NavRow key={n} $active={n === "Environment Variables"}>{n}</NavRow>)}
            </NavList>
          </Sidebar>
          <Main>
            <Heading>Environment Variables</Heading>
            <IntroPara>Environment variables let you add sensitive data (e.g. API keys) to your jobs rather than placing them in the repository. The value of the variables cannot be read or edited in the app once they are set.</IntroPara>
            <SharePara>If you’re looking to share environment variables across projects, try <Link>Contexts</Link>.</SharePara>
            <Card>
              <TableHead>
                <HeadCell>Name</HeadCell>
                <HeadCell $w={200}>Value</HeadCell>
                <Buttons><Btn $primary>Add Environment Variable</Btn><Btn>Import Variables</Btn></Buttons>
              </TableHead>
              {rows.map(([n, v]) => (
                <Row key={n}>
                  <NameCell>{n}</NameCell>
                  <ValueCell>{v}</ValueCell>
                  <RowClose><X size={40} strokeWidth={2.400} /></RowClose>
                </Row>
              ))}
            </Card>
          </Main>
        </Body>
        <BottomShade />
      </Window>

      <Dock>
        {dockApps.map(a => (
          <Cell key={a.key}>
            {a.el}
            {a.finder ? <FinderDot /> : <RunDot $on={a.on} />}
            {a.badge && <NotifBadge>1</NotifBadge>}
          </Cell>
        ))}
        <DockDivider $w={47} />
        {dockApps2.map(a => (
          <Cell key={a.key}>{a.el}<RunDot $on={a.on} /></Cell>
        ))}
        <DockDivider $w={46} />
        <Cell><DocsStack /><RunDot /></Cell>
        <Cell><Trash /><RunDot /></Cell>
      </Dock>
    </Desktop>
  );
}
